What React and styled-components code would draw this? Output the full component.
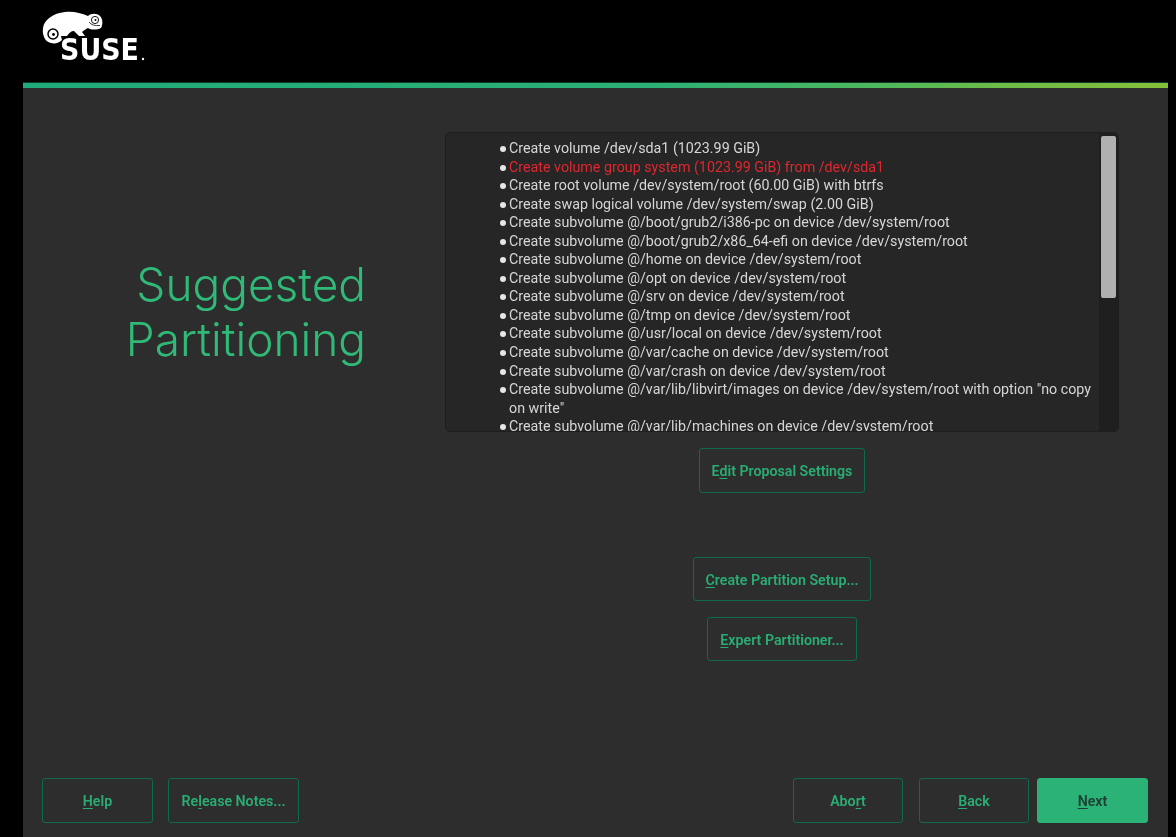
import React from "react";
import styled, { createGlobalStyle } from "styled-components";

const Global = createGlobalStyle`
  html, body { margin: 0; padding: 0; background: #000; }
  #root { width: 1176px; height: 837px; overflow: hidden; }
`;

const Page = styled.div`
  width: 1176px;
  height: 837px;
  background: #000;
  padding-left: 23px;
  box-sizing: border-box;
  display: flex;
  flex-direction: column;
  font-family: Roboto, "Liberation Sans", sans-serif;
  filter: blur(0.4px);
`;

const Header = styled.header`
  height: 82px;
  flex: none;
  margin-left: -23px;
  padding: 10px 0 0 41px;
  box-sizing: border-box;
`;

const Bar = styled.div`
  height: 6px;
  flex: none;
  width: 1145px;
  border-top: 1px solid #0e3a28;
  box-sizing: border-box;
  background: linear-gradient(90deg, #1fab7a 0%, #2cb076 55%, #4fb85c 75%, #6cbc48 85%, #86c03a 100%);
`;

const Main = styled.main`
  flex: 1;
  width: 1145px;
  background: #2d2d2d;
  display: flex;
  flex-direction: column;
  padding: 44px 49px 14px 0;
  box-sizing: border-box;
`;

const Content = styled.div`
  display: flex;
  flex: 1;
`;

const Title = styled.h1`
  width: 343px;
  margin: 125px 79px 0 0;
  flex: none;
  text-align: right;
  font-family: Inter, "Open Sans", sans-serif;
  font-weight: 300;
  font-size: 46px;
  line-height: 54.5px;
  color: #30ba78;
  box-sizing: border-box;
`;

const Right = styled.div`
  width: 674px;
  flex: none;
  display: flex;
  flex-direction: column;
  align-items: center;
`;

const Panel = styled.div`
  width: 100%;
  height: 300px;
  flex: none;
  background: #262626;
  border: 1px solid #1e1e1e;
  border-radius: 5px;
  box-sizing: border-box;
  display: flex;
  overflow: hidden;
`;

const List = styled.ul`
  flex: 1;
  margin: 0;
  padding: 6px 6px 0 54px;
  list-style: none;
  font-size: 14.28px;
  line-height: 18.55px;
  color: #d6d6d6;
  overflow: hidden;
`;

const Item = styled.li`
  position: relative;
  padding-left: 9px;
  color: ${(p) => (p.$alert ? "#e0272f" : "#d6d6d6")};
  &::before {
    content: "";
    position: absolute;
    left: 0;
    top: 7px;
    width: 6px;
    height: 6px;
    border-radius: 50%;
    background: #e6e6e6;
  }
`;

const Track = styled.div`
  width: 19px;
  flex: none;
  background: #1f1f1f;
  padding: 3px 2px 0 2px;
  box-sizing: border-box;
`;

const Thumb = styled.div`
  height: 162px;
  background: #b0b0b0;
  border-radius: 2px;
`;

const Button = styled.button`
  height: ${(p) => p.$h || 45}px;
  width: ${(p) => (p.$w ? `${p.$w}px` : "auto")};
  margin-top: ${(p) => p.$top || 0}px;
  flex: none;
  padding: 1px 12px 0;
  box-sizing: border-box;
  border: 1px solid ${(p) => (p.$primary ? "#2bb277" : "#0f6a4c")};
  border-radius: 3px;
  background: ${(p) => (p.$primary ? "#2bb277" : "transparent")};
  color: ${(p) => (p.$primary ? "#1f3d32" : "#2aad73")};
  font-family: inherit;
  font-size: 14.2px;
  font-weight: 600;
  white-space: nowrap;
  u { text-underline-offset: 2px; }
`;

const Footer = styled.footer`
  display: flex;
  padding-left: 19px;
  flex: none;
`;

const Group = styled.div`
  display: flex;
  gap: ${(p) => p.$gap}px;
  margin-left: ${(p) => p.$left || 0}px;
`;

const Logo = () => (
  <svg width="106" height="56" viewBox="0 0 106 56" aria-label="SUSE">
    <path
      fill="#fff"
      d="M2 18 C3 10 12 3 24 2 C32 1 40 3 47 6 C50 3 56 3 59 6 C62 9 62 15 60 18 C56 20 50 20 47 18 C45 19 43 20 41 22 L44 26 L38 26 L33 21 C30 21 28 23 26 26 L20 26 L21 30 C18 33 14 34 10 33 C4 32 1 25 2 18 Z"
    />
    <circle cx="12" cy="24" r="5" fill="none" stroke="#000" strokeWidth="1.5" />
    <circle cx="12.5" cy="24.5" r="1.4" fill="#000" />
    <circle cx="54" cy="10" r="3.6" fill="none" stroke="#000" strokeWidth="0.9" />
    <circle cx="54.5" cy="10" r="1" fill="#000" />
    <path d="M48 12 C50 15 54 16 59 15.5" fill="none" stroke="#000" strokeWidth="0.8" />
    <text
      x="19"
      y="50"
      fill="#fff"
      fontFamily="'DejaVu Sans', sans-serif"
      fontWeight="700"
      fontSize="30"
      textLength="79"
      lengthAdjust="spacingAndGlyphs"
    >
      SUSE
    </text>
    <circle cx="102" cy="49" r="1.2" fill="#fff" />
  </svg>
);

const rows = [
  "Create volume /dev/sda1 (1023.99 GiB)",
  "Create volume group system (1023.99 GiB) from /dev/sda1",
  "Create root volume /dev/system/root (60.00 GiB) with btrfs",
  "Create swap logical volume /dev/system/swap (2.00 GiB)",
  "Create subvolume @/boot/grub2/i386-pc on device /dev/system/root",
  "Create subvolume @/boot/grub2/x86_64-efi on device /dev/system/root",
  "Create subvolume @/home on device /dev/system/root",
  "Create subvolume @/opt on device /dev/system/root",
  "Create subvolume @/srv on device /dev/system/root",
  "Create subvolume @/tmp on device /dev/system/root",
  "Create subvolume @/usr/local on device /dev/system/root",
  "Create subvolume @/var/cache on device /dev/system/root",
  "Create subvolume @/var/crash on device /dev/system/root",
  'Create subvolume @/var/lib/libvirt/images on device /dev/system/root with option "no copy on write"',
  "Create subvolume @/var/lib/machines on device /dev/system/root",
];

export default function App() {
  return (
    <Page>
      <Global />
      <Header>
        <Logo />
      </Header>
      <Bar />
      <Main>
        <Content>
          <Title>
            Suggested
            <br />
            Partitioning
          </Title>
          <Right>
            <Panel>
              <List>
                {rows.map((r, i) => (
                  <Item key={r} $alert={i === 1}>
                    {r}
                  </Item>
                ))}
              </List>
              <Track>
                <Thumb />
              </Track>
            </Panel>
            <Button $top={16}>
              E<u>d</u>it Proposal Settings
            </Button>
            <Button $top={64} $h={44}>
              <u>C</u>reate Partition Setup...
            </Button>
            <Button $top={16} $h={44}>
              <u>E</u>xpert Partitioner...
            </Button>
          </Right>
        </Content>
        <Footer>
          <Group $gap={15}>
            <Button $w={111}>
              <u>H</u>elp
            </Button>
            <Button $w={131}>
              Re<u>l</u>ease Notes...
            </Button>
          </Group>
          <Group $gap={16} $left={494}>
            <Button $w={110}>
              Abo<u>r</u>t
            </Button>
            <Button $w={110}>
              <u>B</u>ack
            </Button>
          </Group>
          <Group $gap={0} $left={8}>
            <Button $w={111} $primary>
              <u>N</u>ext
            </Button>
          </Group>
        </Footer>
      </Main>
    </Page>
  );
}
